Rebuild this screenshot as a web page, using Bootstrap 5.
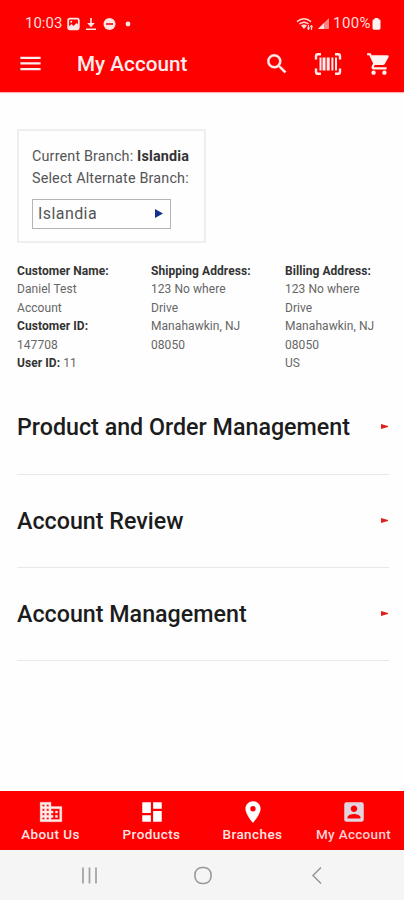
<!DOCTYPE html>
<html lang="en">
<head>
<meta charset="utf-8">
<meta name="viewport" content="width=device-width, initial-scale=1">
<title>My Account</title>
<link href="https://cdn.jsdelivr.net/npm/bootstrap@5.3.0/dist/css/bootstrap.min.css" rel="stylesheet">
<style>
  body { font-family: Roboto, "Liberation Sans", sans-serif; background: #fefefe; color: #555; }
  svg { display: block; flex: none; }
  .screen { height: 900px; }
  .brand-red { background: #fe0000; color: #ffecec; }
  .top-area { height: 92px; box-shadow: 0 1px 1px #ffb5b5; }
  .status-line { height: 47px; padding: 0 23px 0 25px; font-size: 15px; color: #ffdcdc; }
  .power { letter-spacing: .4px; margin: 0 1px 0 4px; }
  .app-line { height: 34px; padding: 0 12px 0 17px; }
  .app-title { font-size: 20.7px; font-weight: 500; margin-left: 33px; line-height: 34px; }
  .app-tools { gap: 24px; margin-top: -1px; }
  .content-area { padding: 37px 15px 0 17px; }
  .branch-box { width: 189px; height: 114px; border: 2px solid #efefef; padding: 15px 0 0 13px; font-size: 14.4px; letter-spacing: .15px; line-height: 22px; }
  .branch-pick { width: 139px; height: 30px; border: 1px solid #b5b5b5; margin-top: 9px; padding: 0 7px 0 5px; font-size: 16px; letter-spacing: .42px; }
  b { font-weight: 700; color: #333; }
  .info-cols { margin-top: 19px; height: 111px; font-size: 12px; line-height: 18.4px; letter-spacing: .06px; color: #666; }
  .info-cols > div { width: 134px; flex: none; white-space: nowrap; }
  .info-cols > div:last-child { width: 104px; }
  .menu-line { border-bottom: 1px solid #e8e8e8; color: #1c1c1c; font-size: 23.25px; font-weight: 500; height: 93.2px; white-space: nowrap; }
  .menu-line svg { margin-top: -1px; }
  .menu-first { height: 102px; padding-top: 7px; }
  .tab-area { height: 59px; color: #ffe4e4; }
  .tab-area > div { width: 101px; padding-top: 8px; font-size: 13.5px; font-weight: 500; line-height: 18px; letter-spacing: .42px; white-space: nowrap; }
  .tab-area .tab-on { color: #ffd0d4; }
  .tab-on span { letter-spacing: .3px; }
  .system-nav { height: 50px; background: #f5f5f5; padding: 0 78px 0 77px; }
</style>
<script src="https://cdn.jsdelivr.net/npm/bootstrap@5.3.0/dist/js/bootstrap.bundle.min.js"></script>
</head>
<body>
<div class="screen d-flex flex-column overflow-hidden">
  <header class="top-area brand-red flex-shrink-0">
    <div class="status-line d-flex align-items-center">
      <span class="clock">10:03</span>
      <svg class="ms-1" width="14" height="14" viewBox="0 0 14 14"><rect x="2.2" y="1.7" width="10.6" height="10.6" rx="1.5" fill="none" stroke="#ffe6e6" stroke-width="1.8"/><path d="M2.500 10l3-3 2 2 3-3 2 2v4h-10z" fill="#ffe6e6"/><circle cx="5.200" cy="4.700" r="1" fill="#ffe6e6"/></svg>
      <svg class="ms-1" width="14" height="14" viewBox="0 0 14 14"><path d="M7 1v7M2 12.300h10" stroke="#ffe6e6" stroke-width="1.600"/><path d="M3.200 6h7.600L7 10.200z" fill="#ffe6e6"/></svg>
      <svg class="ms-1" width="14" height="14" viewBox="0 0 14 14"><circle cx="7.500" cy="7" r="6" fill="#ffe6e6"/><path d="M4 7h7" stroke="#fe0000" stroke-width="1.600"/></svg>
      <svg class="ms-2" width="8" height="8" viewBox="0 0 8 8"><circle cx="4" cy="4" r="2.400" fill="#ffe6e6"/></svg>
      <svg class="ms-auto" width="18" height="14" viewBox="0 0 18 14"><g fill="none" stroke="#ffdcdc" stroke-width="1.500"><path d="M1 4.600q7-5.600 14 0M3.400 7q4.600-3.600 9.200 0"/></g><path d="M5 8.600q3-2 6 0L8 12z" fill="#ffdcdc"/><path d="M12.500 8v5M15.500 8v5" stroke="#ffdcdc" stroke-width="1.200"/><path d="M10.800 10.500h3.400l-1.700 2.500zM13.800 10.300h3.400l-1.700-2.300z" fill="#ffdcdc"/></svg>
      <svg class="ms-1" width="11" height="12" viewBox="0 0 11 12"><path d="M0 11L11 0v11z" fill="#ff8585"/><path d="M0 11l6-6v6z" fill="#ffdcdc"/></svg>
      <span class="power">100%</span>
      <svg width="9" height="14" viewBox="0 0 9 14"><path d="M2.700 1h3.600v1.300H7q1.500 0 1.500 1.500V11q0 1.700-1.500 1.700H2Q.5 12.700.5 11V3.800q0-1.500 1.500-1.500h.7z" fill="#fff2f2"/></svg>
    </div>
    <div class="app-line d-flex align-items-center">
      <svg width="27" height="27" viewBox="0 0 24 24"><path d="M3 17h18v-2H3zm0-5h18v-2H3zm0-7v2h18V5z" fill="#ffecec"/></svg>
      <span class="app-title">My Account</span>
      <div class="app-tools d-flex align-items-center ms-auto">
        <svg width="26" height="26" viewBox="0 0 24 24"><path d="M15.500 14h-.79l-.28-.27A6.470 6.470 0 0 0 16 9.500 6.500 6.500 0 1 0 9.500 16c1.610 0 3.090-.59 4.230-1.570l.27.28v.79l5 4.990L20.490 19zm-6 0a4.500 4.500 0 1 1 0-9 4.500 4.500 0 0 1 0 9z" fill="#ffecec" stroke="#ffecec" stroke-width=".3"/></svg>
        <svg width="28" height="24" viewBox="0 0 28 24"><g fill="none" stroke="#ffecec" stroke-width="2.400"><path d="M7 2.200H4Q2 2.200 2 4.200V7.500M21 2.200h3q2 0 2 2v3.300M7 21.800H4q-2 0-2-2v-3.300M21 21.800h3q2 0 2-2v-3.300"/></g><path d="M6.500 5.500v13M22 5.500v13" stroke="#ffecec" stroke-width="2"/><path d="M10 5.500v13M14.200 5.500v13" stroke="#ffecec" stroke-width="3"/><path d="M18.400 5.500v13" stroke="#ffecec" stroke-width="2"/></svg>
        <svg width="26" height="26" viewBox="0 0 24 24"><g fill="#fff4f4"><path d="M1 2h3.300l.9 2H20q1.400.2.900 1.500l-3.600 6.500q-.6 1-1.750 1H8.100l-.9 1.630q-.1.370.22.370H19v2H7q-2.400-.3-1.750-2.960L6.600 11.600 3 4H1z"/><circle cx="7" cy="20" r="2"/><circle cx="17" cy="20" r="2"/></g></svg>
      </div>
    </div>
  </header>

  <main class="content-area flex-grow-1">
    <section class="branch-box text-nowrap">
      <div>Current Branch: <b>Islandia</b></div>
      <div>Select Alternate Branch:</div>
      <div class="branch-pick d-flex align-items-center justify-content-between">
        <span>Islandia</span>
        <svg width="8" height="10" viewBox="0 0 8 10"><path d="M0 0L8 4.500 0 9z" fill="#12308c"/></svg>
      </div>
    </section>
    <section class="info-cols d-flex">
      <div><b>Customer Name:</b><br>Daniel Test<br>Account<br><b>Customer ID:</b><br>147708<br><b>User ID:</b> 11</div>
      <div><b>Shipping Address:</b><br>123 No where<br>Drive<br>Manahawkin, NJ<br>08050</div>
      <div><b>Billing Address:</b><br>123 No where<br>Drive<br>Manahawkin, NJ<br>08050<br>US</div>
    </section>
    <nav>
      <div class="menu-line menu-first d-flex align-items-center justify-content-between"><span>Product and Order Management</span><svg width="8" height="5" viewBox="0 0 8 5"><path d="M0 0l7 2v1L0 5z" fill="#e0201c"/></svg></div>
      <div class="menu-line d-flex align-items-center justify-content-between"><span>Account Review</span><svg width="8" height="5" viewBox="0 0 8 5"><path d="M0 0l7 2v1L0 5z" fill="#e0201c"/></svg></div>
      <div class="menu-line d-flex align-items-center justify-content-between"><span>Account Management</span><svg width="8" height="5" viewBox="0 0 8 5"><path d="M0 0l7 2v1L0 5z" fill="#e0201c"/></svg></div>
    </nav>
  </main>

  <footer class="flex-shrink-0">
    <div class="tab-area brand-red d-flex">
      <div class="d-flex flex-column align-items-center"><svg width="26" height="26" viewBox="0 0 24 24"><path d="M12 7V3H2v18h20V7zM6 19H4v-2h2zm0-4H4v-2h2zm0-4H4V9h2zm0-4H4V5h2zm4 12H8v-2h2zm0-4H8v-2h2zm0-4H8V9h2zm0-4H8V5h2zm10 12h-8v-2h2v-2h-2v-2h2v-2h-2V9h8zm-2-8h-2v2h2zm0 4h-2v2h2z" fill="#ffeaea" stroke="#ffeaea" stroke-width=".3"/></svg><span>About Us</span></div>
      <div class="d-flex flex-column align-items-center"><svg width="26" height="26" viewBox="0 0 24 24"><path d="M3 13h8V3H3zm0 8h8v-6H3zm10 0h8V11h-8zm0-18v6h8V3z" fill="#fff"/></svg><span>Products</span></div>
      <div class="d-flex flex-column align-items-center"><svg width="26" height="26" viewBox="0 0 24 24"><path d="M12 2C8.130 2 5 5.130 5 9c0 5.250 7 13 7 13s7-7.750 7-13c0-3.870-3.130-7-7-7zm0 9.500a2.500 2.500 0 1 1 0-5 2.500 2.500 0 0 1 0 5z" fill="#fff"/></svg><span>Branches</span></div>
      <div class="d-flex flex-column align-items-center tab-on"><svg width="26" height="26" viewBox="0 0 24 24"><path d="M3 5v14a2 2 0 0 0 2 2h14c1.100 0 2-.9 2-2V5a2 2 0 0 0-2-2H5a2 2 0 0 0-2 2zm12 4c0 1.660-1.340 3-3 3s-3-1.340-3-3 1.340-3 3-3 3 1.340 3 3zm-9 8c0-2 4-3.100 6-3.100s6 1.100 6 3.100v1H6z" fill="#e3d5df"/></svg><span>My Account</span></div>
    </div>
    <div class="system-nav d-flex align-items-center justify-content-between">
      <svg width="24" height="20" viewBox="0 0 24 20"><path d="M6 2.500v16M12.500 2.500v16M19 2.500v16" stroke="#a0a0a0" stroke-width="1.700"/></svg>
      <svg width="20" height="20" viewBox="0 0 20 20"><rect x="1" y="2.500" width="16" height="16" rx="7" fill="none" stroke="#999" stroke-width="1.600"/></svg>
      <svg width="20" height="20" viewBox="0 0 20 20"><path d="M15 2.500L7 10.500l8 8" fill="none" stroke="#999" stroke-width="1.600"/></svg>
    </div>
  </footer>
</div>
</body>
</html>
